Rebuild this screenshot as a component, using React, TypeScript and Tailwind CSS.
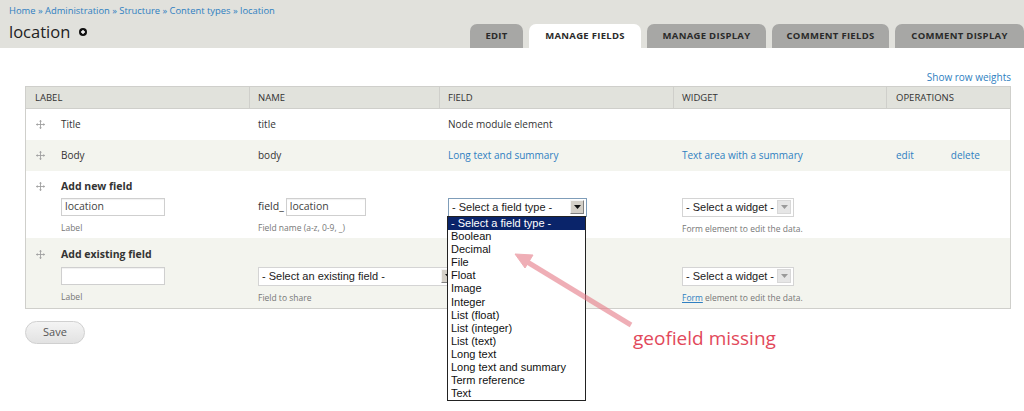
import type { ReactNode } from "react";

const COLS = "grid grid-cols-[223px_190px_234px_213px_1fr]";
const LINK = "text-[#2f7fc1]";

const TABS = [
  { label: "Edit", width: "w-[53px]", active: false },
  { label: "Manage fields", width: "w-[112px]", active: true },
  { label: "Manage display", width: "w-[119px]", active: false },
  { label: "Comment fields", width: "w-[117px]", active: false },
  { label: "Comment display", width: "w-[129px]", active: false },
];

const FIELD_TYPES = [
  "Boolean",
  "Decimal",
  "File",
  "Float",
  "Image",
  "Integer",
  "List (float)",
  "List (integer)",
  "List (text)",
  "Long text",
  "Long text and summary",
  "Term reference",
  "Text",
];

function DragHandle() {
  return (
    <svg width="9" height="9" viewBox="0 0 10 10" className="shrink-0">
      <g stroke="#a0a0a0" strokeWidth="1" fill="none">
        <path d="M5 0.5V9.5M0.5 5H9.5" />
      </g>
      <g fill="#a0a0a0">
        <path d="M5 0L3.3 1.8H6.7Z" />
        <path d="M5 10L3.3 8.2H6.7Z" />
        <path d="M0 5L1.8 3.3V6.7Z" />
        <path d="M10 5L8.2 3.3V6.7Z" />
      </g>
    </svg>
  );
}

function SelectBox(props: {
  text: string;
  width: string;
  focused?: boolean;
  faded?: boolean;
}) {
  return (
    <div
      className={`flex h-[19px] items-center justify-between border bg-white pl-[3px] pr-[2px] ${props.width} ${
        props.focused ? "border-[#7f9db9]" : "border-[#d4d4d4]"
      }`}
    >
      <span className="whitespace-nowrap font-['Liberation_Sans',sans-serif] text-[11px] text-[#222]">
        {props.text}
      </span>
      <span
        className={`flex h-[14px] w-[14px] shrink-0 items-center justify-center border ${
          props.faded
            ? "border-[#d8d8d8] bg-[#e6e6e6]"
            : "border-t-[#f4f4f4] border-l-[#f4f4f4] border-r-[#808080] border-b-[#808080] bg-[#d4d0c8]"
        }`}
      >
        <svg width="7" height="4" viewBox="0 0 7 4">
          <path d="M0 0H7L3.5 4Z" fill={props.faded ? "#9a9a9a" : "#111"} />
        </svg>
      </span>
    </div>
  );
}

function TextInput(props: { value?: string; width: string }) {
  return (
    <div
      className={`flex h-[18px] items-center border border-[#cfcfcf] bg-white px-[3px] text-[10.5px] text-[#444] shadow-[inset_0_1px_1px_rgba(0,0,0,0.06)] ${props.width}`}
    >
      {props.value}
    </div>
  );
}

function Hint({ children }: { children: ReactNode }) {
  return <div className="mt-[6px] text-[8.5px] text-[#777]">{children}</div>;
}

function SimpleRow(props: {
  label: string;
  name: string;
  field: ReactNode;
  widget?: ReactNode;
  ops?: boolean;
  shaded?: boolean;
}) {
  return (
    <div
      className={`${COLS} h-[31px] items-center text-[10px] text-[#333] ${
        props.shaded ? "bg-[#f3f4ee]" : "bg-white"
      }`}
    >
      <div className="flex items-center gap-[16px] pl-[10px]">
        <DragHandle />
        <span>{props.label}</span>
      </div>
      <div className="pl-[9px]">{props.name}</div>
      <div className="pl-[9px]">{props.field}</div>
      <div className="pl-[9px]">{props.widget}</div>
      <div className="flex gap-[37px] pl-[10px]">
        {props.ops && (
          <>
            <span className={LINK}>edit</span>
            <span className={LINK}>delete</span>
          </>
        )}
      </div>
    </div>
  );
}

export default function App() {
  return (
    <div className="relative h-[411px] w-[1024px] overflow-hidden bg-white font-['Open_Sans',sans-serif] text-[#333]">
      <header className="flex h-[48px] items-end justify-between bg-[#e1e1dc]">
        <div className="flex h-full flex-col pl-[9px] pt-[4px]">
          <div className={`text-[9.4px] ${LINK}`}>
            Home » Administration » Structure » Content types » location
          </div>
          <div className="mt-[3px] flex items-center gap-[9px]">
            <span className="text-[16.5px] leading-[22px] text-[#222]">location</span>
            <span className="flex h-[8px] w-[8px] items-center justify-center rounded-full bg-[#111]">
              <svg width="6" height="6" viewBox="0 0 6 6">
                <path d="M3 1V5M1 3H5" stroke="#fff" strokeWidth="1.4" />
              </svg>
            </span>
          </div>
        </div>
        <nav className="flex gap-[6px]">
          {TABS.map((tab) => (
            <div
              key={tab.label}
              className={`flex h-[24px] items-center justify-center rounded-t-[7px] text-[9.5px] font-bold uppercase tracking-[0.3px] text-[#2a2a2a] ${tab.width} ${
                tab.active ? "bg-white" : "bg-[#a7a7a5]"
              }`}
            >
              {tab.label}
            </div>
          ))}
        </nav>
      </header>

      <main className="pl-[25px] pr-[13px] pt-[22px]">
        <div className={`h-[14px] text-right text-[10px] leading-[14px] ${LINK}`}>
          Show row weights
        </div>
        <div className="mt-[2px] border border-[#cfcfcb]">
          <div
            className={`${COLS} h-[22px] items-center border-b border-[#cfcfcb] bg-[#e1e2dc] text-[9.5px] uppercase text-[#333]`}
          >
            <div className="pl-[9px]">Label</div>
            <div className="h-full border-l border-[#cfcfcb] pl-[8px] leading-[22px]">Name</div>
            <div className="h-full border-l border-[#cfcfcb] pl-[8px] leading-[22px]">Field</div>
            <div className="h-full border-l border-[#cfcfcb] pl-[8px] leading-[22px]">Widget</div>
            <div className="h-full border-l border-[#cfcfcb] pl-[9px] leading-[22px]">Operations</div>
          </div>

          <SimpleRow label="Title" name="title" field="Node module element" />
          <SimpleRow
            shaded
            ops
            label="Body"
            name="body"
            field={<span className={LINK}>Long text and summary</span>}
            widget={<span className={LINK}>Text area with a summary</span>}
          />

          <div className="h-[67px] bg-white pt-[8px]">
            <div className="flex items-center gap-[16px] pl-[10px] text-[10.5px] font-bold text-[#333]">
              <DragHandle />
              <span>Add new field</span>
            </div>
            <div className={`${COLS} mt-[3px]`}>
              <div className="pl-[35px]">
                <TextInput value="location" width="w-[104px]" />
                <Hint>Label</Hint>
              </div>
              <div className="pl-[9px]">
                <div className="flex items-center gap-[2px] text-[10.5px] text-[#333]">
                  <span>field_</span>
                  <TextInput value="location" width="w-[80px]" />
                </div>
                <Hint>Field name (a-z, 0-9, _)</Hint>
              </div>
              <div className="pl-[9px]">
                <SelectBox text="- Select a field type -" width="w-[139px]" focused />
              </div>
              <div className="pl-[9px]">
                <SelectBox text="- Select a widget -" width="w-[112px]" faded />
                <Hint>Form element to edit the data.</Hint>
              </div>
              <div />
            </div>
          </div>

          <div className="h-[70px] bg-[#f3f4ee] pt-[9px]">
            <div className="flex items-center gap-[16px] pl-[10px] text-[10.5px] font-bold text-[#333]">
              <DragHandle />
              <span>Add existing field</span>
            </div>
            <div className={`${COLS} mt-[4px]`}>
              <div className="pl-[35px]">
                <TextInput width="w-[104px]" />
                <Hint>Label</Hint>
              </div>
              <div className="pl-[9px]">
                <SelectBox text="- Select an existing field -" width="w-[200px]" />
                <Hint>Field to share</Hint>
              </div>
              <div />
              <div className="pl-[9px]">
                <SelectBox text="- Select a widget -" width="w-[112px]" faded />
                <div className="mt-[6px] text-[8.5px] text-[#777]">
                  <span className={`underline ${LINK}`}>Form</span> element to edit the data.
                </div>
              </div>
              <div />
            </div>
          </div>
        </div>

        <button
          type="button"
          className="mt-[12px] h-[23px] w-[60px] rounded-full border border-[#d0d0d0] bg-gradient-to-b from-[#f4f4f4] to-[#e2e2e2] text-[11px] text-[#555]"
        >
          Save
        </button>
      </main>

      {/* open field type list */}
      <div className="absolute left-[447px] top-[216px] w-[139px] border border-[#222] bg-white font-['Liberation_Sans',sans-serif] text-[11px] leading-[13.1px] text-[#111]">
        <div className="bg-[#0a246a] pl-[3px] text-white">- Select a field type -</div>
        {FIELD_TYPES.map((type) => (
          <div key={type} className="pl-[3px]">
            {type}
          </div>
        ))}
      </div>

      {/* annotation */}
      <svg
        className="pointer-events-none absolute left-[500px] top-[240px]"
        width="150"
        height="100"
        viewBox="0 0 150 100"
      >
        <g opacity="0.6" fill="#e57a86" stroke="#e57a86">
          <path d="M131 85L24 20" strokeWidth="5" />
          <path d="M15 14L33 15L25 28Z" strokeWidth="1" />
        </g>
      </svg>
      <div className="absolute left-[633px] top-[325px] text-[19px] leading-[26px] text-[#e2485a]">
        geofield missing
      </div>
    </div>
  );
}
